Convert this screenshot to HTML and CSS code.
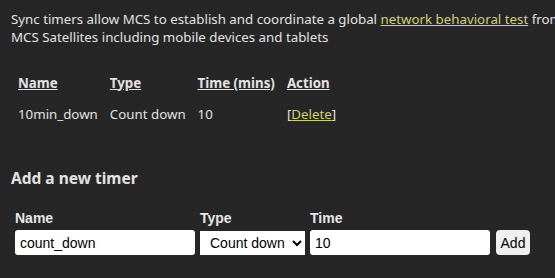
FILE: index.html
```html
<!DOCTYPE html>
<html lang="en">
<head>
	<meta charset="UTF-8">
	<title>Sync timers</title>
	<link rel="stylesheet" href="styles.css">
</head>
<body>
	<div class="page">
		<p class="intro">Sync timers allow MCS to establish and coordinate a global <a href="#">network behavioral test</a> from MCS Satellites including mobile devices and tablets</p>

		<table class="timers">
			<tr>
				<th>Name</th>
				<th>Type</th>
				<th>Time (mins)</th>
				<th>Action</th>
			</tr>
			<tr>
				<td>10min_down</td>
				<td>Count down</td>
				<td>10</td>
				<td>[<a href="#">Delete</a>]</td>
			</tr>
		</table>

		<h3 class="add-title">Add a new timer</h3>

		<form class="add-form">
			<label for="t-name">Name</label>
			<label for="t-type">Type</label>
			<label for="t-time">Time</label>
			<span></span>
			<input type="text" id="t-name" value="count_down">
			<select id="t-type">
				<option>Count down</option>
				<option>Count up</option>
			</select>
			<input type="text" id="t-time" value="10">
			<button type="button">Add</button>
		</form>
	</div>
</body>
</html>
```

FILE: styles.css
```css
*{margin:0;padding:0;box-sizing:border-box}
html,body{
	background:#262626;
	overflow:hidden;
}
body{
	color:#e2e2e2;
	font-family:"Noto Sans","Open Sans",sans-serif;
	font-size:13.3px;
}
.page{
	padding:10px 0 0 11px;
	width:600px;
}
a{
	color:#d2d26a;
	text-decoration:underline;
}
.intro{
	line-height:18px;
	width:565px;
}
.timers{
	border-collapse:separate;
	border-spacing:0;
	margin:21px 0 0 1px;
}
.timers th,
.timers td{
	text-align:left;
	padding:0 6px;
	height:31px;
	white-space:nowrap;
}
.timers th{
	text-decoration:underline;
	font-weight:bold;
}
.add-title{
	font-size:15.5px;
	font-weight:bold;
	margin:39px 0 0 0;
	line-height:20px;
}
.add-form{
	display:grid;
	grid-template-columns:180px 105px 180px auto;
	column-gap:5px;
	row-gap:4px;
	margin:22px 0 0 4px;
	align-items:end;
}
.add-form label{
	font-family:"Liberation Sans",Arial,sans-serif;
	font-weight:bold;
	font-size:14px;
	color:#e6e6e6;
}
.add-form input{
	height:25px;
	border:none;
	border-radius:3px;
	background:#fff;
	padding:0 5px;
	font-family:"Liberation Sans",Arial,sans-serif;
	font-size:14px;
	color:#000;
}
.add-form select{
	height:24px;
	border:none;
	border-radius:0;
	background:#fff;
	font-family:"Liberation Sans",Arial,sans-serif;
	font-size:14px;
	color:#000;
	padding:0 0 0 6px;
}
.add-form button{
	height:25px;
	width:34px;
	margin-left:1px;
	border:none;
	border-radius:4px;
	background:#efefef;
	font-family:"Liberation Sans",Arial,sans-serif;
	font-size:14px;
	color:#000;
}
```
